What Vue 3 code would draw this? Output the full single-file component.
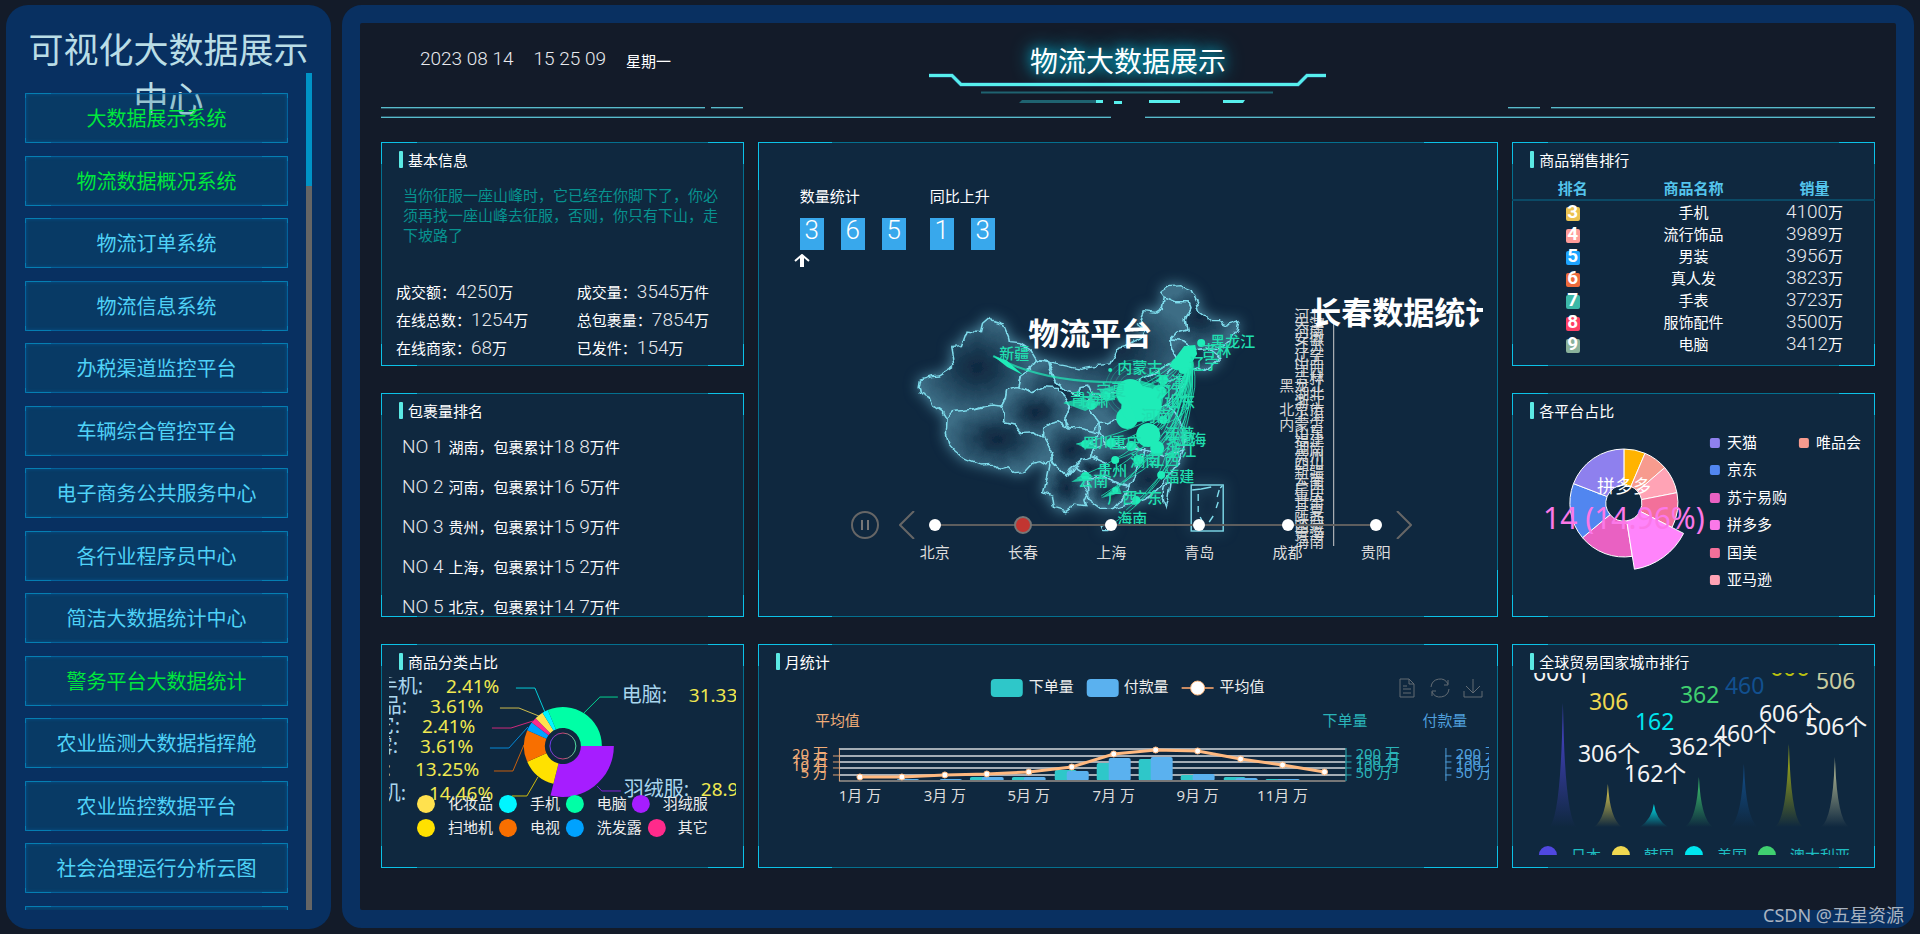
<template>
  <div class="screen">
    <aside class="side">
      <h1 class="side__title">可视化大数据展示中心</h1>
      <nav class="side__list">
        <a
          v-for="item in menus"
          :key="item.name"
          href="#"
          class="side__item frame"
          :class="{ 'side__item--green': item.green }"
        >{{ item.name }}</a>
      </nav>
      <div class="side__scroll"><div class="side__thumb" /></div>
    </aside>

    <main class="board">
      <header class="head">
        <svg class="head__lines" viewBox="0 0 1494 119" preserveAspectRatio="none">
          <path d="M0 84.5H324M330 84.5H362M1127 84.5H1159M1170 84.5H1494M0 94.5H730M764 94.5H1494" stroke="#58bccb" />
          <path d="M0 85.5H324M330 85.5H362M1127 85.5H1159M1170 85.5H1494M0 93.5H730M764 93.5H1494" stroke="#2a5364" />
        </svg>
        <div class="head__time">
          <span class="lcd">2023 08 14</span>
          <span class="lcd">15 25 09</span>
          <span>星期一</span>
        </div>
        <div class="head__center">
          <h2 class="head__title">物流大数据展示</h2>
          <svg width="400" height="34" fill="none">
            <path d="M1 4.5H24L33 13.5H370L379 4.5H398" stroke="#3fa0e8" stroke-width="4" opacity=".5" />
            <path d="M1 4.5H24L33 13.5H370L379 4.5H398" stroke="#57efec" stroke-width="3" />
            <path d="M53 21.5H345" stroke="#1f6370" stroke-width="2" />
            <path d="M94 29H168V32H91Z" fill="#1f6370" />
            <path d="M168 29h7v3h-7zM186 30h8v3h-8zM221 29h31v3h-31zM295 29h22l-2 3h-20z" fill="#57efec" />
          </svg>
        </div>
      </header>

      <div class="grid">
        <section class="card frame">
          <h3 class="card__title">基本信息</h3>
          <p class="info__text">当你征服一座山峰时，它已经在你脚下了，你必须再找一座山峰去征服，否则，你只有下山，走下坡路了</p>
          <div class="info__stats">
            <div v-for="s in stats" :key="s[0]">{{ s[0] }}：<span class="lcd">{{ s[1] }}</span>{{ s[2] }}</div>
          </div>
        </section>

        <section class="card card--tall frame">
          <div class="count">
            <div class="count__group">
              <div>数量统计</div>
              <div class="count__boxes"><span v-for="n in '365'" :key="n" class="lcd">{{ n }}</span></div>
            </div>
            <div class="count__group">
              <div>同比上升</div>
              <div class="count__boxes"><span v-for="n in '13'" :key="n" class="lcd">{{ n }}</span></div>
            </div>
          </div>
          <svg class="count__arrow" width="16" height="14" fill="none" stroke="#fff" stroke-width="2">
            <path d="M1 7L8 1L15 7" />
            <path d="M8 2V13" stroke-width="4" />
          </svg>
          <div class="map">
            <svg class="map__svg" viewBox="0 0 710 340">
              <defs>
                <radialGradient id="land">
                  <stop offset="0" stop-color="#0f2840" />
                  <stop offset=".3" stop-color="#17364e" />
                  <stop offset="1" stop-color="#3c6d85" />
                </radialGradient>
                <filter id="rough" x="-10%" y="-10%" width="120%" height="120%">
                  <feTurbulence type="fractalNoise" baseFrequency=".09" numOctaves="2" seed="4" />
                  <feDisplacementMap in="SourceGraphic" scale="7" xChannelSelector="R" yChannelSelector="G" />
                </filter>
              </defs>
              <g class="map__land">
                <g filter="url(#rough)">
                  <g transform="translate(127 0) scale(.3827 .3333)">
                    <polygon v-for="(p, i) in provinces" :key="i" :points="p" fill="url(#land)" />
                    <polygon points="525,770 540,760 553,770 545,785 530,785" />
                    <polygon points="690,645 705,640 700,680 692,710 685,690" />
                  </g>
                </g>
                <rect x="418" y="215" width="32" height="46" />
                <path d="M419 220L428 219L438 217M447 218L449 216M425 224V231M425 236V242M427 247L429 251M446 220L444 227M445 232L443 238M440 246L436 252" />
              </g>
              <g fill="none" stroke="#1fecb8">
                <path v-for="(d, i) in routes" :key="i" :d="d" opacity=".75" />
                <path d="M220 86Q272 114 350 112" stroke-width="2" opacity=".7" />
                <circle v-for="r in [16, 20, 25, 29]" :key="r" cx="361" cy="119" :r="r" opacity=".3" />
              </g>
              <g fill="#1fecb8">
                <ellipse v-for="(e, i) in spots" :key="i" :cx="e[0]" :cy="e[1]" :rx="e[2]" :ry="e[3] || e[2]" />
                <path d="M220 86L233 90L250 105L234 97ZM411 76L422 75L424 84L416 97L402 100L396 96Z" />
                <path d="M290 133L312 129L322 136L312 141ZM303 174L318 169L322 177L312 178ZM298 212L314 202L320 207L312 211ZM328 228L345 215L348 222L340 225ZM326 120L340 116L342 130L332 131ZM350 118L366 110L392 118L386 150L364 152Z" opacity=".75" />
              </g>
              <g class="map__names">
                <text v-for="n in names" :key="n[0]" :x="n[1]" :y="n[2]">{{ n[0] }}</text>
              </g>
              <g class="map__rank">
                <text v-for="(n, i) in rankNames" :key="n" x="551" :y="51 + i * 7.8">{{ n }}</text>
                <path d="M560.5 53V276" stroke="#ccc" />
              </g>
              <text class="map__big" x="255" y="75">物流平台</text>
              <text class="map__big" x="537" y="54">长春数据统计</text>
            </svg>
            <div class="timeline">
              <button class="timeline__play" aria-label="暂停"><i /><i /></button>
              <button class="timeline__arrow" aria-label="上一个"><svg width="16" height="28"><path d="M15 0L1 14L15 28" /></svg></button>
              <div class="timeline__nodes">
                <button
                  v-for="c in cities"
                  :key="c"
                  class="timeline__node"
                  :class="{ 'timeline__node--on': c === '长春' }"
                ><i />{{ c }}</button>
              </div>
              <button class="timeline__arrow" aria-label="下一个"><svg width="16" height="28"><path d="M1 0L15 14L1 28" /></svg></button>
            </div>
          </div>
        </section>

        <section class="card frame">
          <h3 class="card__title">商品销售排行</h3>
          <div class="sales">
            <table>
              <thead>
                <tr><th>排名</th><th>商品名称</th><th>销量</th></tr>
              </thead>
              <tbody>
                <tr v-for="g in goods" :key="g[0]">
                  <td><b class="sales__no lcd" :style="{ background: g[3] }">{{ g[0] }}</b></td>
                  <td>{{ g[1] }}</td>
                  <td><span class="lcd">{{ g[2] }}</span>万</td>
                </tr>
              </tbody>
            </table>
          </div>
        </section>

        <section class="card frame">
          <h3 class="card__title">包裹量排名</h3>
          <ul class="parcel">
            <li v-for="(p, i) in parcels" :key="p[0]">
              <span class="lcd parcel__no">NO {{ i + 1 }}</span>{{ p[0] }}，包裹累计<span class="lcd">{{ p[1] }}</span>万件
            </li>
          </ul>
        </section>

        <section class="card frame">
          <h3 class="card__title">各平台占比</h3>
          <svg class="chart chart--platform" viewBox="0 0 361 190">
            <g stroke="#fff">
              <path v-for="s in platformSlices" :key="s.color" :d="s.d" :fill="s.color" />
            </g>
            <text x="111" y="74" font-size="18" fill="#fff" text-anchor="middle">拼多多</text>
            <text x="111" y="110" font-size="30" fill="#fb78e8" text-anchor="middle">14 (14.96%)</text>
            <g v-for="l in platformLegend" :key="l[0]">
              <rect :x="l[2]" :y="l[3] - 5" width="10" height="10" rx="2" :fill="l[1]" />
              <text :x="l[2] + 17" :y="l[3] + 5" fill="#fff">{{ l[0] }}</text>
            </g>
          </svg>
        </section>

        <section class="card frame">
          <h3 class="card__title">商品分类占比</h3>
          <svg class="chart chart--kind" viewBox="0 0 347 165">
            <defs>
              <linearGradient id="ring">
                <stop offset="0" stop-color="#6a3cf0" />
                <stop offset=".5" stop-color="#d03c6c" />
                <stop offset="1" stop-color="#4ce0a0" />
              </linearGradient>
            </defs>
            <path v-for="s in kindSlices" :key="s.color" :d="s.d" :fill="s.color" />
            <circle cx="174" cy="69" r="13" fill="none" stroke="url(#ring)" />
            <g v-for="k in kinds" :key="k.name">
              <polyline :points="k.line" fill="none" :stroke="k.color" opacity=".8" />
              <text class="kind__name" :x="k.nx" :y="k.y" :text-anchor="k.end ? 'end' : 'start'">{{ k.name }}:</text>
              <text class="kind__rate" :x="k.rx" :y="k.y">{{ k.rate }}%</text>
              <circle :cx="k.lx" :cy="k.ly" r="9" :fill="k.color" />
            </g>
            <text v-for="k in kinds" :key="k.name" :x="k.tx" :y="k.ly + 5" fill="#eee">{{ k.name }}</text>
          </svg>
        </section>

        <section class="card frame">
          <h3 class="card__title">月统计</h3>
          <div class="month">
            <svg class="chart chart--month" viewBox="0 0 732 140">
              <rect x="233" y="5" width="32" height="18" rx="4" fill="#2ec7c9" />
              <rect x="329" y="5" width="32" height="18" rx="4" fill="#5ab1ef" />
              <path d="M424 14H456" stroke="#c98b62" stroke-width="2" />
              <circle cx="440" cy="14" r="7" fill="#fff" stroke="#ffb980" />
              <g fill="#eee">
                <text x="271" y="18">下单量</text>
                <text x="366" y="18">付款量</text>
                <text x="462" y="18">平均值</text>
              </g>
              <g fill="#f0ac78">
                <text x="57" y="52">平均值</text>
                <text v-for="t in ticks" :key="t[0]" x="70" :y="t[1] + 4" text-anchor="end">{{ t[0] / 10 }} 万</text>
              </g>
              <g fill="#2ab3b8">
                <text x="565" y="52">下单量</text>
                <text v-for="t in ticks" :key="t[0]" x="598" :y="t[1] + 4">{{ t[0] }} 万</text>
              </g>
              <g fill="#4f9fdc">
                <text x="665" y="52">付款量</text>
                <text v-for="t in ticks" :key="t[0]" x="698" :y="t[1] + 4">{{ t[0] }} 万</text>
              </g>
              <path d="M81 75H588M81 82H588M81 88H588M81 94H588M81 101H588" stroke="#a4adb5" stroke-width="2" />
              <g v-for="m in months" :key="m.x">
                <rect :x="m.x - 17" :y="m.a" width="22" :height="107 - m.a" rx="2" fill="#2ec7c9" />
                <rect :x="m.x - 5" :y="m.b" width="22" :height="107 - m.b" rx="2" fill="#5ab1ef" />
              </g>
              <path d="M81 107H588" stroke="#777" stroke-width="2" />
              <path d="M81.5 74V107M75 82H81M75 88H81M75 94H81M75 101H81" stroke="#e0a273" />
              <path d="M588.5 74V107M588 82H594M588 88H594M588 94H594M588 101H594" stroke="#2ab3b8" />
              <path d="M688.5 74V107M688 82H694M688 88H694M688 94H694M688 101H694" stroke="#4f9fdc" />
              <polyline :points="avgLine" fill="none" stroke="#ffb980" stroke-width="3" />
              <circle v-for="m in months" :key="m.x" :cx="m.x" :cy="m.c" r="3" fill="#fff" stroke="#ffb980" />
              <g fill="#ddd" text-anchor="middle">
                <text v-for="i in 6" :key="i" :x="months[i * 2 - 2].x" y="127">{{ i * 2 - 1 }}月 万</text>
              </g>
            </svg>
            <div class="tools">
              <button aria-label="数据视图"><svg width="20" height="20"><path d="M3 1H12L17 6V19H3ZM12 1V6H17M6 8H10M6 11H14M6 15H14" /></svg></button>
              <button aria-label="刷新"><svg width="20" height="20"><path d="M1 9A9 9 0 0 1 18 6M19 11A9 9 0 0 1 2 14M18 2V7H14M2 18V13H6" /></svg></button>
              <button aria-label="下载"><svg width="20" height="20"><path d="M10 1V15M3 8L10 15L17 8M1 13V19H19V13" /></svg></button>
            </div>
          </div>
        </section>

        <section class="card frame">
          <h3 class="card__title">全球贸易国家城市排行</h3>
          <svg class="chart chart--trade" viewBox="0 0 361 182">
            <defs>
              <linearGradient v-for="(t, i) in trades" :id="'t' + i" :key="i" x1="0" y1="0" x2="0" y2="1">
                <stop offset="0" :stop-color="t.color" />
                <stop offset="1" :stop-color="t.color" stop-opacity="0" />
              </linearGradient>
            </defs>
            <path
              v-for="(t, i) in trades"
              :key="i"
              :d="spike(t.x, t.top)"
              :fill="`url(#t${i})`"
            />
            <g font-size="23">
              <text v-for="(t, i) in trades" :key="i" :x="t.x - 19" :y="t.y" :fill="t.color">{{ t.n }}</text>
              <text v-for="(t, i) in trades" :key="i" :x="t.x - 30" :y="t.top - 22" fill="#f4f4f4">{{ t.n }}个</text>
            </g>
            <g v-for="c in countries" :key="c[0]">
              <circle :cx="c[1]" cy="182" r="9" :fill="c[2]" />
              <text :x="c[1] + 23" y="188" fill="#1ebcc0">{{ c[0] }}</text>
            </g>
          </svg>
        </section>
      </div>
    </main>
    <div class="mark">CSDN @五星资源</div>
  </div>
</template>

<script setup>
const menus = [
  { name: '大数据展示系统', green: true },
  { name: '物流数据概况系统', green: true },
  { name: '物流订单系统' },
  { name: '物流信息系统' },
  { name: '办税渠道监控平台' },
  { name: '车辆综合管控平台' },
  { name: '电子商务公共服务中心' },
  { name: '各行业程序员中心' },
  { name: '简洁大数据统计中心' },
  { name: '警务平台大数据统计', green: true },
  { name: '农业监测大数据指挥舱' },
  { name: '农业监控数据平台' },
  { name: '社会治理运行分析云图' },
  { name: '' },
];

const stats = [
  ['成交额', '4250', '万'],
  ['成交量', '3545', '万件'],
  ['在线总数', '1254', '万'],
  ['总包裹量', '7854', '万'],
  ['在线商家', '68', '万'],
  ['已发件', '154', '万'],
];

const parcels = [
  ['湖南', '18 8'],
  ['河南', '16 5'],
  ['贵州', '15 9'],
  ['上海', '15 2'],
  ['北京', '14 7'],
];

const goods = [
  [3, '手机', '4100', '#ecc351'],
  [4, '流行饰品', '3989', '#ff9c99'],
  [5, '男装', '3956', '#1ea4ff'],
  [6, '真人发', '3823', '#ec6a3c'],
  [7, '手表', '3723', '#3cb8a8'],
  [8, '服饰配件', '3500', '#ff4066'],
  [9, '电脑', '3412', '#8ab29b'],
  [10, '', '3213', 'transparent'],
];

// ring sector, angles in degrees clockwise from twelve o'clock
const sector = (cx, cy, r0, r1, from, to) => {
  const at = (r, deg) => {
    const a = (deg * Math.PI) / 180;
    return `${(cx + r * Math.sin(a)).toFixed(1)} ${(cy - r * Math.cos(a)).toFixed(1)}`;
  };
  return `M${at(r1, from)}A${r1} ${r1} 0 0 1 ${at(r1, to)}L${at(r0, to)}A${r0} ${r0} 0 0 0 ${at(r0, from)}Z`;
};

const platformSlices = [
  [0, 23, '#ffb300'],
  [23, 49, '#f79b8e'],
  [49, 79, '#ffa3b5'],
  [79, 117, '#f3709a'],
  [171, 230, '#e961c2'],
  [230, 291, '#5186f0'],
  [291, 360, '#8e80ee'],
  [117, 171, '#ff84fb', 67],
].map(([a, b, color, r]) => ({ color, d: sector(111, 84, 18, r || 54, a, b) }));

const platformLegend = [
  ['天猫', '#8e80ee', 197, 24],
  ['京东', '#5186f0', 197, 51],
  ['苏宁易购', '#e961c2', 197, 79],
  ['拼多多', '#fb78e8', 197, 106],
  ['国美', '#f3709a', 197, 134],
  ['亚马逊', '#ffa3b5', 197, 161],
  ['唯品会', '#f79b8e', 286, 24],
];

const kinds = [
  { name: '化妆品', rate: '3.61', color: '#ffe14e', line: '111,31 130,31 150,39', nx: 18, rx: 41, y: 36, end: true, lx: 37, ly: 127, tx: 59 },
  { name: '手机', rate: '2.41', color: '#00f6ff', line: '127,11 146,11 156,35', nx: 34, rx: 57, y: 16, end: true, lx: 119, ly: 127, tx: 141 },
  { name: '电脑', rate: '31.33', color: '#00ffa6', line: '229,20 211,20 195,36', nx: 233, rx: 300, y: 25, lx: 186, ly: 127, tx: 208 },
  { name: '羽绒服', rate: '28.92', color: '#a61dff', line: '232,114 213,114 208,109', nx: 235, rx: 312, y: 119, lx: 252, ly: 127, tx: 274 },
  { name: '扫地机', rate: '14.46', color: '#ffe100', line: '123,119 138,119 149,100', nx: 17, rx: 40, y: 123, end: true, lx: 37, ly: 151, tx: 59 },
  { name: '电视', rate: '13.25', color: '#f86f00', line: '105,94 124,94 135,68', nx: 2, rx: 26, y: 99, end: true, lx: 119, ly: 151, tx: 141 },
  { name: '洗发露', rate: '3.61', color: '#00a2ff', line: '101,71 120,71 139,50', nx: 9, rx: 31, y: 76, end: true, lx: 186, ly: 151, tx: 208 },
  { name: '其它', rate: '2.41', color: '#ff2a8b', line: '103,51 122,51 144,44', nx: 11, rx: 33, y: 56, end: true, lx: 268, ly: 151, tx: 289 },
];

let angle = -22.8;
const kindSlices = [2, 3, 4, 5, 6, 7, 0, 1].map((i) => {
  const from = angle;
  angle += kinds[i].rate * 3.6;
  return { color: kinds[i].color, d: sector(174, 69, 18, i === 3 ? 51 : 39, from, angle) };
});

const ticks = [[200, 81], [150, 87], [100, 93], [50, 100]];
const orders = [106, 106, 106, 103, 103, 96, 89, 85, 101, 103, 105, 106];
const pays = [106, 105, 105, 103, 103, 97, 84, 83, 100, 104, 105, 106];
const avgs = [103, 103, 101, 100, 98, 93, 80, 76, 77, 85, 91, 98];
const months = orders.map((a, i) => ({ x: Math.round(102 + i * 42.3), a, b: pays[i], c: avgs[i] }));
const avgLine = months.map((m) => `${m.x},${m.c}`).join(' ');

const trades = [
  { n: 606, x: 50, top: 30, y: -44, color: '#5048e0' },
  { n: 306, x: 95, top: 111, y: 37, color: '#f0d850' },
  { n: 162, x: 141, top: 131, y: 57, color: '#00e5ee' },
  { n: 362, x: 186, top: 104, y: 30, color: '#40d070' },
  { n: 460, x: 231, top: 91, y: 21, color: '#12508f' },
  { n: 606, x: 276, top: 71, y: 3, color: '#b8c010' },
  { n: 506, x: 322, top: 84, y: 16, color: '#c8cca0' },
];
const spike = (x, top) =>
  `M${x} ${top}Q${x + 2} 146 ${x + 14} 154H${x - 14}Q${x - 2} 146 ${x} ${top}Z`;

const countries = [
  ['日本', 35, '#5048e0'],
  ['韩国', 108, '#f0d850'],
  ['美国', 181, '#00e5ee'],
  ['澳大利亚', 254, '#40d070'],
];

const cities = ['北京', '长春', '上海', '青岛', '成都', '贵阳'];

const provinces = [
  '47,350 50,330 80,320 100,318 133,295 143,285 135,232 160,230 175,180 210,185 215,160 235,140 245,155 270,165 283,200 285,215 310,218 340,240 357,272 340,295 318,310 310,350 278,360 275,385 265,408 215,408 190,418 137,425 120,445 110,425 85,405 78,385 50,370',
  '120,445 137,425 190,418 240,405 265,408 272,430 270,458 300,465 315,488 350,485 375,505 385,520 393,545 395,575 380,585 365,575 345,580 325,605 300,608 285,590 257,598 240,580 210,582 180,570 160,560 145,545 125,520 118,490',
  '278,360 305,350 325,355 345,368 370,350 410,352 430,380 445,410 437,430 430,450 433,470 412,455 395,460 375,475 375,505 350,485 315,488 300,465 270,458 272,430 265,408 275,385',
  '357,272 385,275 390,300 410,340 440,365 465,375 470,350 490,345 500,370 490,400 500,430 520,460 500,485 470,475 440,470 430,450 445,410 430,380 410,352 370,350 345,368 325,355 310,350 318,310 340,295',
  '357,272 440,290 470,298 510,290 545,285 562,255 570,235 600,225 630,205 640,180 620,165 635,125 665,130 685,115 690,80 720,95 755,95 760,110 745,150 750,180 720,190 705,210 710,240 725,270 690,290 650,320 600,345 560,370 530,380 500,370 490,345 470,350 465,375 440,365 410,340 385,275',
  '690,80 680,65 700,50 730,47 760,60 775,95 783,130 815,155 835,155 855,165 885,155 880,180 860,210 830,240 800,235 770,240 740,215 705,210 720,190 750,180 745,150 760,110 755,95 720,95',
  '705,210 740,215 770,240 800,235 835,265 820,285 790,305 760,290 740,270 725,270 710,240',
  '725,270 715,290 690,320 700,330 730,330 740,345 715,370 700,400 640,430 580,440 540,460 520,460 500,430 490,400 500,370 530,380 560,370 600,345 650,320 690,290',
  '700,400 720,430 735,470 745,500 740,540 690,560 640,540 590,530 540,520 520,490 520,460 540,460 580,440 640,430',
  '375,505 375,475 395,460 412,455 433,470 470,475 520,490 495,520 510,530 500,560 475,570 450,590 435,622 400,580 395,545',
  '393,575 435,622 460,590 490,610 475,640 490,665 480,690 485,710 455,705 430,725 400,715 395,675 375,665 385,620',
  '475,570 500,560 540,580 530,620 490,630 490,610 460,590',
  '490,665 490,630 530,620 570,640 600,650 580,690 560,715 520,715 490,690',
  '600,650 620,590 640,540 690,560 740,540 725,580 700,620 670,660 640,685 600,700 560,715 580,690',
  '540,520 590,530 640,540 620,590 600,650 570,640 530,620 540,580 500,560 510,530',
];

// curves that leave Changchun, the southern ones bow out over the coast
const hub = [417, 80];
const targets = [
  [338, 255], [353, 240], [362, 236], [328, 226], [304, 208], [340, 200], [342, 190],
  [303, 174], [335, 175], [370, 170], [380, 165], [388, 160], [396, 152], [352, 148],
  [358, 150], [372, 140], [380, 132], [360, 130], [345, 126], [317, 136], [291, 133],
  [365, 118], [376, 190], [385, 205], [350, 212], [360, 195], [378, 178], [392, 170],
  [388, 210], [340, 222], [375, 125], [385, 140], [384, 150], [368, 160],
];
const routes = targets.map(([x, y], i) => {
  const cx = y > 145 ? hub[0] + 16 - (i % 6) * 6 : (hub[0] + x) / 2 + 12;
  const cy = (hub[1] + y) / 2 + (y > 145 ? 22 : 10);
  return `M${hub[0]} ${hub[1]}Q${cx} ${cy} ${x} ${y}`;
});

const spots = [
  [357, 123, 14], [372, 134, 16, 17], [354, 148, 11], [375, 165, 12], [362, 138, 14],
  [428, 73, 4], [404, 94, 6], [410, 99, 5], [390, 110, 5], [386, 122, 7], [390, 150, 4],
  [318, 135, 5], [312, 174, 4], [338, 173, 5], [358, 176, 5], [342, 190, 4], [312, 206, 4],
  [342, 220, 3], [363, 230, 4], [388, 205, 4], [365, 190, 5], [384, 178, 7], [333, 126, 4],
  [337, 100, 2],
];

const names = [
  ['新疆', 226, 89], ['黑龙江', 437, 77], ['吉林', 428, 86], ['辽宁', 416, 99],
  ['内蒙古', 344, 103], ['天津', 382, 117], ['河北', 383, 127], ['山东', 392, 137],
  ['宁夏', 323, 125], ['青海', 297, 134], ['甘肃', 306, 136], ['河南', 368, 151],
  ['四川', 310, 178], ['重庆', 338, 178], ['江苏', 391, 169], ['安徽', 392, 173],
  ['上海', 403, 175], ['浙江', 393, 186], ['湖南', 357, 196], ['江西', 376, 195],
  ['贵州', 324, 206], ['云南', 305, 216], ['福建', 391, 212], ['广西', 334, 233],
  ['广东', 359, 233], ['海南', 344, 254],
];

const rankNames = [
  '河北', '天津', '河南', '安徽', '江苏', '辽宁', '山西', '江西', '吉林', '黑龙江',
  '湖北', '浙江', '北京市', '上海', '内蒙古', '山东', '福建', '湖南', '贵州', '四川',
  '新疆', '云南', '广西', '重庆', '甘肃', '宁夏', '陕西', '西藏', '青海', '海南',
];
</script>

<style>
body {
  margin: 0;
  background: #131b29;
}
</style>

<style scoped>
.screen {
  position: relative;
  box-sizing: border-box;
  display: flex;
  gap: 11px;
  height: 100vh;
  padding: 5px 6px;
  font: 15px/20px 'Noto Sans', 'Noto Sans CJK SC', sans-serif;
  color: #fff;
}

.screen *,
.screen *::before {
  box-sizing: border-box;
}

button {
  padding: 0;
  border: 0;
  background: none;
  color: inherit;
  font: inherit;
  cursor: pointer;
}

.lcd {
  font-family: Roboto, 'Noto Sans', sans-serif;
  font-size: 19px;
  font-weight: 300;
  line-height: 0;
  color: #e8eaee;
}

/* thin frame with brighter corners */
.frame {
  --dim: #04708f;
  --lit: #0cc2e8;
  --h: linear-gradient(90deg, var(--lit) 10%, var(--dim) 10% 90%, var(--lit) 90%);
  --v: linear-gradient(var(--lit) 10%, var(--dim) 10% 90%, var(--lit) 90%);
  background:
    var(--h) top / 100% 1px no-repeat,
    var(--h) bottom / 100% 1px no-repeat,
    var(--v) left / 1px 100% no-repeat,
    var(--v) right / 1px 100% no-repeat,
    #0f283f;
}

.side {
  position: relative;
  flex: none;
  display: flex;
  width: 325px;
  padding: 68px 19px 19px;
  border-radius: 22px;
  background: #083061;
}

.side__title {
  position: absolute;
  top: 20px;
  left: 0;
  width: 100%;
  margin: 0;
  padding: 0 15px;
  font-size: 35px;
  font-weight: 400;
  line-height: 49px;
  text-align: center;
  color: #b9dde6;
}

.side__list {
  position: relative;
  flex: 1;
  padding: 20px 18px 0 0;
  overflow: hidden;
}

.side__item {
  --dim: #04659b;
  --lit: #0594c4;
  display: block;
  height: 50px;
  margin-bottom: 13px;
  background-color: rgba(8, 98, 122, 0.2);
  box-shadow: inset 0 0 4px #06609c;
  font-size: 20px;
  line-height: 52px;
  text-align: center;
  text-decoration: none;
  color: #4fd2f7;
}

.side__item:nth-child(even) {
  margin-bottom: 12px;
}

.side__item--green {
  color: #00e83c;
}

.side__scroll {
  width: 6px;
  background: #656565;
}

.side__thumb {
  height: 113px;
  background: #0093c6;
}

.board {
  flex: 1;
  min-width: 0;
  margin-bottom: 1px;
  padding: 0 21px;
  border: 18px solid #093061;
  border-radius: 20px;
  background: #131b29;
}

.head {
  position: relative;
  display: grid;
  grid-template-columns: 1fr auto 1fr;
  height: 119px;
  padding-top: 20px;
}

.head__lines {
  position: absolute;
  top: 0;
  left: 0;
  width: 100%;
  height: 119px;
}

.head__time {
  display: flex;
  gap: 20px;
  padding-left: 39px;
  line-height: 36px;
}

.head__time .lcd {
  line-height: 32px;
}

.head__center {
  display: flex;
  flex-direction: column;
  align-items: center;
}

.head__center svg {
  margin-top: -8px;
}

.head__title {
  margin: 0;
  font-size: 28px;
  font-weight: 400;
  line-height: 36px;
  text-shadow: 0 0 20px #00d8ff, 0 0 12px #0a90a8;
}

.grid {
  display: grid;
  grid-template-columns: 49fr 100fr 49fr;
  grid-auto-rows: 224px;
  gap: 27px 14px;
}

.card {
  display: flex;
  flex-direction: column;
  min-width: 0;
  overflow: hidden;
}

.card--tall {
  grid-row: span 2;
}

.card__title {
  flex: none;
  display: flex;
  align-items: center;
  gap: 5px;
  height: 17px;
  margin: 9px 0 0 18px;
  font-size: 15px;
  font-weight: 400;
}

.card__title::before {
  content: '';
  width: 4px;
  height: 17px;
  border-radius: 1px;
  background: #5be9e4;
}

.info__text {
  margin: 17px 24px 0 22px;
  color: #07928f;
}

.info__stats {
  display: grid;
  grid-template-columns: 52fr 48fr;
  margin: 33px 0 0 15px;
  line-height: 28px;
}

.parcel {
  margin: 8px 0 0 21px;
  padding: 0;
  list-style: none;
  line-height: 40px;
}

.parcel__no {
  margin-right: 5px;
}

.sales {
  height: 182px;
  margin-top: 8px;
  overflow: hidden;
}

.sales table {
  width: 100%;
  table-layout: fixed;
  border-collapse: collapse;
  text-align: center;
}

.sales th {
  height: 24px;
  padding: 0;
  border-bottom: 2px solid #0b4a66;
  line-height: 20px;
  color: #54c4ec;
}

.sales td {
  height: 22px;
  padding: 0;
  line-height: 22px;
}

.sales__no {
  display: inline-block;
  width: 14px;
  height: 14px;
  border-radius: 2px;
  font-weight: 700;
  line-height: 10px;
  vertical-align: middle;
  color: #fff;
}

.count {
  display: flex;
  gap: 24px;
  padding: 44px 0 0 42px;
}

.count__boxes {
  display: flex;
  gap: 17px;
  margin-top: 12px;
}

.count__boxes span {
  width: 24px;
  height: 32px;
  background: #38a8ec;
  font-size: 26px;
  line-height: 24px;
  text-align: center;
  color: #fff;
}

.count__arrow {
  margin: 4px 0 0 36px;
}

.map {
  position: relative;
  margin: 2px 15px 0;
}

.map__svg,
.chart {
  display: block;
  width: 100%;
  overflow: hidden;
  font-size: 15px;
}

.map__svg {
  height: 340px;
}

.map__land {
  fill: none;
  stroke: #7fdcec;
  stroke-width: 1.4px;
  filter: drop-shadow(0 0 7px rgba(120, 205, 230, 0.6));
}

.map__land polygon {
  stroke-width: 4px;
}

.map__names {
  font-weight: 500;
  fill: #20dfb0;
}

.map__rank {
  fill: #d6d6d6;
  text-anchor: end;
}

.map__big {
  font-size: 31px;
  font-weight: 700;
  fill: #fff;
}

.timeline {
  position: absolute;
  top: 241px;
  left: 78px;
  display: flex;
  align-items: flex-start;
  gap: 5px;
}

.timeline__play {
  display: flex;
  justify-content: center;
  align-items: center;
  gap: 4px;
  width: 28px;
  height: 28px;
  margin-right: 15px;
  border: 2px solid #666;
  border-radius: 50%;
}

.timeline__play i {
  width: 2px;
  height: 10px;
  background: #777;
}

.timeline__arrow {
  display: flex;
}

.timeline__arrow path {
  fill: none;
  stroke: #666;
  stroke-width: 2px;
}

.timeline__nodes {
  position: relative;
  display: flex;
  justify-content: space-between;
  width: 471px;
}

.timeline__nodes::before {
  content: '';
  position: absolute;
  top: 13px;
  left: 15px;
  right: 15px;
  height: 2px;
  background: #5e5e5e;
}

.timeline__node {
  position: relative;
  display: flex;
  flex-direction: column;
  align-items: center;
  width: 30px;
  white-space: nowrap;
  color: #ddd;
}

.timeline__node i {
  width: 12px;
  height: 12px;
  margin: 8px 0 11px;
  border-radius: 50%;
  background: #fff;
}

.timeline__node--on i {
  width: 18px;
  height: 18px;
  margin: 5px 0 8px;
  border: 2px solid #777;
  background: #c23531;
}

.chart--platform {
  height: 190px;
}

.chart--kind {
  width: auto;
  height: 165px;
  margin: 7px 8px 0;
}

.kind__name {
  font-size: 20px;
  fill: #a9d6ee;
}

.kind__rate {
  font-size: 19px;
  fill: #f0e850;
}

.chart--month {
  height: 140px;
  margin-top: 4px;
}

.month {
  position: relative;
  padding-right: 9px;
}

.tools {
  position: absolute;
  top: 8px;
  right: 15px;
  display: flex;
  gap: 13px;
}

.tools button {
  display: flex;
}

.tools path {
  fill: none;
  stroke: #626b73;
}

.chart--trade {
  height: 182px;
  margin-top: 3px;
}

.mark {
  position: absolute;
  right: 16px;
  bottom: 8px;
  font-size: 18px;
  line-height: 22px;
  color: #a9b3c0;
}
</style>
